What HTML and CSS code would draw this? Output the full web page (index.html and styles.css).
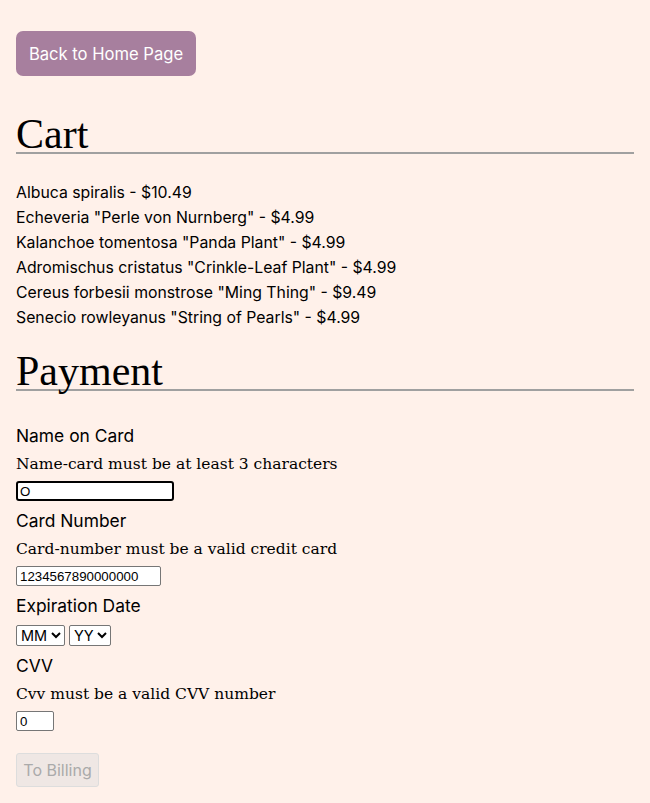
FILE: index.html
```html
<!DOCTYPE html>
<html>
<head>
<meta charset="utf-8">
<link rel="stylesheet" href="styles.css">
</head>
<body>
<main class="page">
  <button class="home-btn">Back to Home Page</button>
  <h1 class="section-title">Cart</h1>
  <ul class="cart-list">
    <li>Albuca spiralis - $10.49</li>
    <li>Echeveria "Perle von Nurnberg" - $4.99</li>
    <li>Kalanchoe tomentosa "Panda Plant" - $4.99</li>
    <li>Adromischus cristatus "Crinkle-Leaf Plant" - $4.99</li>
    <li>Cereus forbesii monstrose "Ming Thing" - $9.49</li>
    <li>Senecio rowleyanus "String of Pearls" - $4.99</li>
  </ul>
  <h1 class="section-title payment-title">Payment</h1>
  <form class="pay-form">
    <div class="field">
      <label class="label">Name on Card</label>
      <div class="error">Name-card must be at least 3 characters</div>
      <input class="input input-name focused" type="text" value="O">
    </div>
    <div class="field">
      <label class="label">Card Number</label>
      <div class="error">Card-number must be a valid credit card</div>
      <input class="input input-card" type="text" value="1234567890000000">
    </div>
    <div class="field">
      <label class="label">Expiration Date</label>
      <div class="selects">
        <select class="sel"><option>MM</option></select>
        <select class="sel"><option>YY</option></select>
      </div>
    </div>
    <div class="field">
      <label class="label">CVV</label>
      <div class="error">Cvv must be a valid CVV number</div>
      <input class="input input-cvv" type="text" value="0">
    </div>
    <button class="submit-btn" type="button" disabled>To Billing</button>
  </form>
</main>
</body>
</html>
```

FILE: styles.css
```css
html, body {
  margin: 0;
  padding: 0;
  background: #fff1ea;
}
body {
  font-family: "Inter", "Liberation Sans", sans-serif;
  color: #000;
}
.page {
  padding: 31px 16px 16px 16px;
  display: flex;
  flex-direction: column;
  align-items: stretch;
}
.home-btn {
  align-self: flex-start;
  background: #a77f9e;
  color: #fff;
  border: none;
  border-radius: 7px;
  height: 45px;
  width: 180px;
  font-family: "Inter", "Liberation Sans", sans-serif;
  font-size: 16.6px;
  padding: 0;
}
.section-title {
  font-family: "Liberation Serif", serif;
  font-weight: normal;
  font-size: 42px;
  line-height: 36px;
  margin: 40px 0 0 0;
  padding: 0;
  border-bottom: 2px solid #a0a0a0;
}
.payment-title {
  margin-top: 23px;
}
.cart-list {
  list-style: none;
  margin: 26px 0 0 0;
  padding: 0;
  font-size: 15.8px;
  line-height: 25px;
}
.pay-form {
  margin-top: 31px;
  display: flex;
  flex-direction: column;
}
.field {
  display: flex;
  flex-direction: column;
  align-items: flex-start;
}
.label {
  font-size: 17.4px;
  line-height: 28px;
}
.error {
  font-family: "DejaVu Serif", serif;
  font-size: 15.5px;
  line-height: 28px;
}
.input {
  font-family: "Liberation Sans", Arial, sans-serif;
  font-size: 13.3px;
  height: 20px;
  box-sizing: border-box;
  border: 1px solid #767676;
  border-radius: 2px;
  background: #fff;
  padding: 1px 3px;
  margin: 3px 0 6px 0;
  color: #000;
}
.input.focused {
  border: 2px solid #000;
  border-radius: 3px;
  padding: 0 2px;
}
.input-name { width: 158px; }
.input-card { width: 145px; }
.input-cvv { width: 38px; }
.selects {
  display: flex;
  gap: 4px;
  margin: 5px 0 6px 0;
}
.sel {
  font-family: "Inter", "Liberation Sans", sans-serif;
  font-size: 14.5px;
  height: 21px;
  box-sizing: border-box;
  background: #fff;
  border: 1px solid #767676;
  border-radius: 2px;
  color: #000;
}
.submit-btn {
  align-self: flex-start;
  margin-top: 16px;
  width: 83px;
  height: 34px;
  font-family: "Inter", "Liberation Sans", sans-serif;
  font-size: 16px;
  color: #aaa;
  background: #efe7e4;
  border: 1px solid #ddd;
  border-radius: 3px;
  padding: 0;
}
```
